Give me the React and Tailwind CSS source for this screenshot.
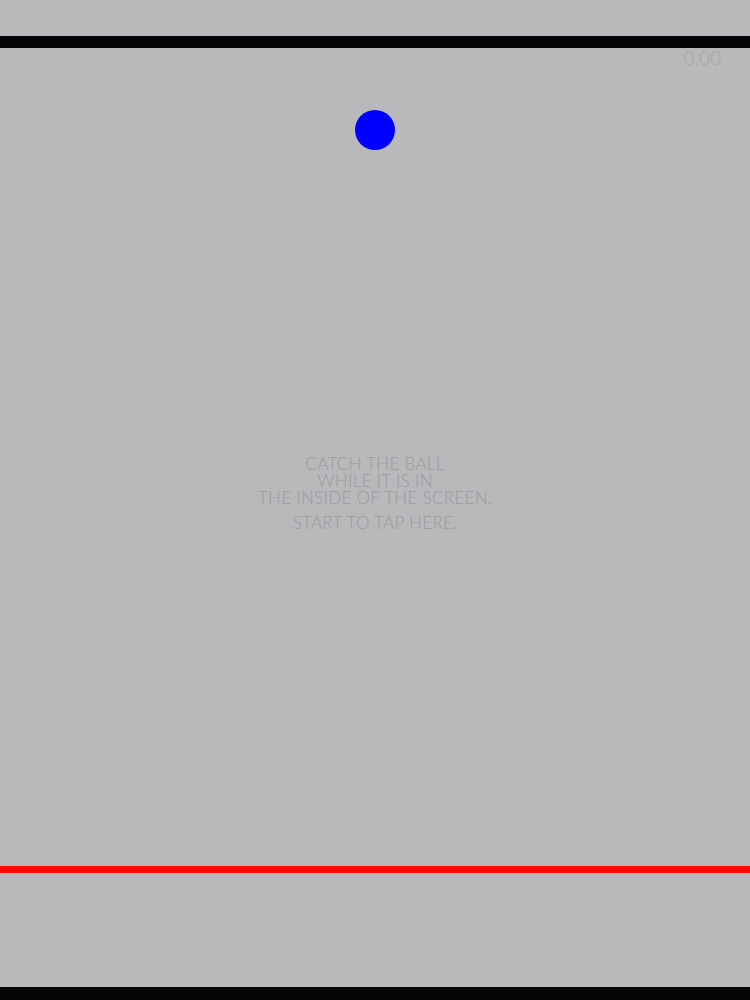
import React from "react";

const App = () => {
  return (
    <div
      className="w-[750px] h-[1000px] flex flex-col bg-[#b9b8bb] overflow-hidden"
      style={{ fontFamily: "Lato, 'Open Sans', sans-serif" }}
    >
      <div className="h-[36px] shrink-0" />
      <div className="h-[12px] shrink-0 bg-[#050505]" />

      {/* Play field */}
      <div className="relative flex-1 flex flex-col items-center">
        <div className="self-end pr-[29px] text-[19px] leading-[19px] font-light text-[#a6a5a8]">
          0.00
        </div>

        {/* ball */}
        <div className="absolute left-[355px] top-[62px] w-[40px] h-[40px] rounded-full bg-[#0000ff]" />

        <div className="pt-[388px] flex flex-col items-center text-[17px] leading-[17px] font-light tracking-[0.3px] text-[#99989b] uppercase text-center">
          <span>Catch the ball</span>
          <span>While it is in</span>
          <span>The inside of the screen.</span>
          <span className="mt-[8px]">Start to tap here.</span>
        </div>
      </div>

      <div className="h-[7px] shrink-0 bg-[#ff0a0a]" />
      <div className="h-[114px] shrink-0" />
      <div className="h-[13px] shrink-0 bg-[#050505]" />
    </div>
  );
};

export default App;
